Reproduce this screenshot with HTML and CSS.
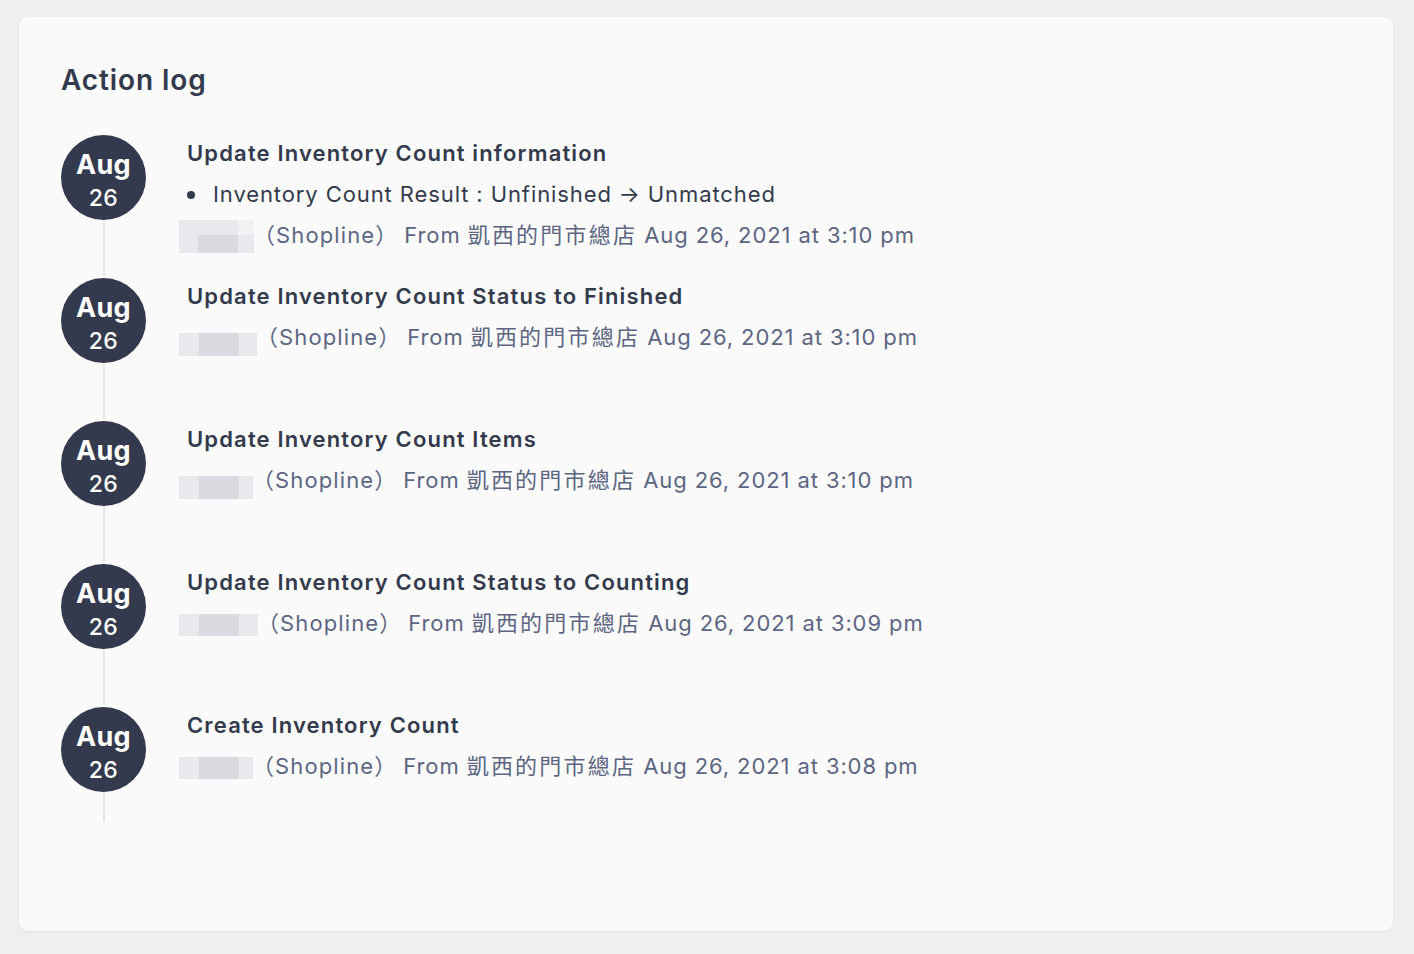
FILE: index.html
```html
<!DOCTYPE html>
<html lang="en">
<head>
  <meta charset="UTF-8">
  <title>Action log</title>
  <link rel="stylesheet" href="styles.css">
</head>
<body>
  <div class="card">
    <h2 class="card-title">Action log</h2>

    <div class="timeline">
      <div class="log-item">
        <div class="rail">
          <div class="date-badge"><span class="month">Aug</span><span class="day">26</span></div>
          <div class="rail-line"></div>
        </div>
        <div class="log-body">
          <div class="log-title">Update Inventory Count information</div>
          <div class="log-change"><span class="dot"></span>Inventory Count Result : Unfinished → Unmatched</div>
          <div class="log-meta">
            <span class="blur blur-tall">
              <i class="px lt"></i><i class="px lt"></i><i class="px lt"></i><i class="px xl"></i>
              <i class="px lt"></i><i class="px md"></i><i class="px md"></i><i class="px lt"></i>
            </span>
            <span class="meta-text"><span class="who">（Shopline）</span>From <span class="cjk">凱西的門市總店</span> Aug 26, 2021 at 3:10 pm</span>
          </div>
        </div>
      </div>

      <div class="log-item">
        <div class="rail">
          <div class="date-badge"><span class="month">Aug</span><span class="day">26</span></div>
          <div class="rail-line"></div>
        </div>
        <div class="log-body">
          <div class="log-title">Update Inventory Count Status to Finished</div>
          <div class="log-meta">
            <span class="blur blur-low">
              <i class="px lt"></i><i class="px md"></i><i class="px md"></i><i class="px lt"></i>
            </span>
            <span class="meta-text"><span class="who">（Shopline）</span>From <span class="cjk">凱西的門市總店</span> Aug 26, 2021 at 3:10 pm</span>
          </div>
        </div>
      </div>

      <div class="log-item">
        <div class="rail">
          <div class="date-badge"><span class="month">Aug</span><span class="day">26</span></div>
          <div class="rail-line"></div>
        </div>
        <div class="log-body">
          <div class="log-title">Update Inventory Count Items</div>
          <div class="log-meta">
            <span class="blur blur-low blur-narrow">
              <i class="px lt"></i><i class="px md"></i><i class="px md"></i><i class="px lt"></i>
            </span>
            <span class="meta-text"><span class="who">（Shopline）</span>From <span class="cjk">凱西的門市總店</span> Aug 26, 2021 at 3:10 pm</span>
          </div>
        </div>
      </div>

      <div class="log-item">
        <div class="rail">
          <div class="date-badge"><span class="month">Aug</span><span class="day">26</span></div>
          <div class="rail-line"></div>
        </div>
        <div class="log-body">
          <div class="log-title">Update Inventory Count Status to Counting</div>
          <div class="log-meta">
            <span class="blur">
              <i class="px lt"></i><i class="px md"></i><i class="px md"></i><i class="px lt"></i>
            </span>
            <span class="meta-text"><span class="who">（Shopline）</span>From <span class="cjk">凱西的門市總店</span> Aug 26, 2021 at 3:09 pm</span>
          </div>
        </div>
      </div>

      <div class="log-item">
        <div class="rail">
          <div class="date-badge"><span class="month">Aug</span><span class="day">26</span></div>
          <div class="rail-line"></div>
        </div>
        <div class="log-body">
          <div class="log-title">Create Inventory Count</div>
          <div class="log-meta">
            <span class="blur blur-narrow">
              <i class="px lt"></i><i class="px md"></i><i class="px md"></i><i class="px lt"></i>
            </span>
            <span class="meta-text"><span class="who">（Shopline）</span>From <span class="cjk">凱西的門市總店</span> Aug 26, 2021 at 3:08 pm</span>
          </div>
        </div>
      </div>
    </div>
  </div>
</body>
</html>
```

FILE: styles.css
```css
body {
  margin: 0;
  padding: 17px 21px 23px 19px;
  background-color: #eeeff1;
  font-family: Inter, "Noto Sans CJK TC", sans-serif;
  color: #333a4c;
}

.card {
  height: 914px;
  box-sizing: border-box;
  padding: 46px 42px 0 42px;
  background-color: #fafafa;
  border-radius: 9px;
  box-shadow: 0 1px 3px rgba(40, 45, 60, 0.08);
}

.card-title {
  margin: 0 0 36px 0;
  font-size: 28px;
  line-height: 34px;
  font-weight: 600;
  letter-spacing: 0.9px;
  color: #333a4c;
}

.timeline {
  display: flex;
  flex-direction: column;
}

.log-item {
  display: flex;
  min-height: 143px;
}

.log-item:last-child {
  min-height: 117px;
}

.rail {
  width: 85px;
  flex-shrink: 0;
  display: flex;
  flex-direction: column;
  align-items: center;
  padding-top: 2px;
}

.date-badge {
  width: 85px;
  height: 85px;
  border-radius: 50%;
  background-color: #343a4d;
  color: #fff;
  display: flex;
  flex-direction: column;
  align-items: center;
  padding-top: 15px;
  box-sizing: border-box;
  flex-shrink: 0;
}

.month {
  font-size: 27px;
  line-height: 30px;
  font-weight: 700;
  letter-spacing: 0.3px;
}

.day {
  font-size: 23px;
  line-height: 30px;
  font-weight: 500;
  margin-top: 3px;
  letter-spacing: 0.5px;
}

.rail-line {
  flex: 1;
  width: 2px;
  background-color: #e4e6ea;
}

.log-body {
  padding-left: 33px;
  font-size: 22px;
  line-height: 41px;
  letter-spacing: 0.9px;
}

.log-title {
  padding-left: 8px;
  font-weight: 600;
  letter-spacing: 1.15px;
  color: #333a4c;
}

.log-change {
  padding-left: 8px;
  display: flex;
  align-items: center;
  color: #333a4c;
}

.dot {
  width: 8px;
  height: 8px;
  border-radius: 50%;
  background-color: #333a4c;
  margin: 0 18px 0 0;
}

.log-meta {
  display: flex;
  align-items: center;
  color: #5c6682;
}

.meta-text {
  white-space: nowrap;
}

.who {
  margin-left: -1px;
  margin-right: 6px;
  letter-spacing: 1.1px;
}

.cjk {
  letter-spacing: 2.2px;
}

.blur {
  display: grid;
  grid-template-columns: 20px 20px 20px 19px;
  grid-auto-rows: 22px;
  margin-top: 3px;
}

.blur-tall {
  grid-template-columns: 19px 20px 20px 16px;
  grid-template-rows: 15px 18px;
  margin-top: 2px;
}

.blur-low {
  grid-template-columns: 20px 20px 20px 18px;
  grid-auto-rows: 23px;
  margin-top: 14px;
}

.blur-narrow {
  grid-template-columns: 20px 20px 20px 14px;
}

.px {
  display: block;
}

.xl {
  background-color: #f0f1f3;
}

.lt {
  background-color: #e8e9ed;
}

.md {
  background-color: #d9dbe1;
}
```
